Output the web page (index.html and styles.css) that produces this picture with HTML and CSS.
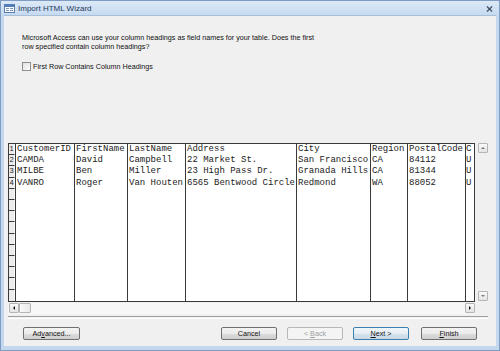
FILE: index.html
```html
<!DOCTYPE html>
<html lang="en">
<head>
  <meta charset="UTF-8">
  <title>Import HTML Wizard</title>
  <link rel="stylesheet" href="styles.css">
</head>
<body>

  <div class="window">
    <div class="titlebar">
      <svg class="app-icon" width="11" height="9" viewBox="0 0 11 9">
        <rect x="0.5" y="0.5" width="10" height="8" fill="#fff" stroke="#5a7fae"/>
        <rect x="1" y="1" width="9" height="2" fill="#4f7fc0"/>
        <rect x="2" y="4" width="3" height="1" fill="#7c95b5"/>
        <rect x="6" y="4" width="3" height="1" fill="#7c95b5"/>
        <rect x="2" y="6" width="3" height="1" fill="#7c95b5"/>
        <rect x="6" y="6" width="3" height="1" fill="#7c95b5"/>
      </svg>
      <span class="title">Import HTML Wizard</span>
      <svg class="close" width="7" height="6" viewBox="0 0 7 6">
        <path d="M1 0.5 L6 5.5 M6 0.5 L1 5.5" stroke="#3d4f66" stroke-width="1.3"/>
      </svg>
    </div>

    <div class="body">
      <p class="intro">Microsoft Access can use your column headings as field names for your table. Does the first<br>row specified contain column headings?</p>

      <label class="check"><span class="box"></span>First Row Contains Column Headings</label>

      <div class="data">
        <div class="data-main">
          <div class="grid">
            <div class="rownums">
              <div class="num">1</div>
              <div class="num">2</div>
              <div class="num">3</div>
              <div class="num">4</div>
              <div class="num"></div>
              <div class="num"></div>
              <div class="num"></div>
              <div class="num"></div>
              <div class="num"></div>
              <div class="num"></div>
              <div class="num"></div>
              <div class="num"></div>
              <div class="num"></div>
              <div class="num"></div>
            </div>
            <div class="col col-id">
              <div class="cell">CustomerID</div>
              <div class="cell">CAMDA</div>
              <div class="cell">MILBE</div>
              <div class="cell">VANRO</div>
            </div>
            <div class="col col-first">
              <div class="cell">FirstName</div>
              <div class="cell">David</div>
              <div class="cell">Ben</div>
              <div class="cell">Roger</div>
            </div>
            <div class="col col-last">
              <div class="cell">LastName</div>
              <div class="cell">Campbell</div>
              <div class="cell">Miller</div>
              <div class="cell">Van Houten</div>
            </div>
            <div class="col col-address">
              <div class="cell">Address</div>
              <div class="cell">22 Market St.</div>
              <div class="cell">23 High Pass Dr.</div>
              <div class="cell">6565 Bentwood Circle</div>
            </div>
            <div class="col col-city">
              <div class="cell">City</div>
              <div class="cell">San Francisco</div>
              <div class="cell">Granada Hills</div>
              <div class="cell">Redmond</div>
            </div>
            <div class="col col-region">
              <div class="cell">Region</div>
              <div class="cell">CA</div>
              <div class="cell">CA</div>
              <div class="cell">WA</div>
            </div>
            <div class="col col-postal">
              <div class="cell">PostalCode</div>
              <div class="cell">84112</div>
              <div class="cell">81344</div>
              <div class="cell">88052</div>
            </div>
            <div class="col col-country">
              <div class="cell">C</div>
              <div class="cell">U</div>
              <div class="cell">U</div>
              <div class="cell">U</div>
            </div>
          </div>

          <div class="hscroll">
            <span class="sbtn"><i class="arrow left"></i></span>
            <span class="thumb"></span>
            <span class="track"></span>
            <span class="sbtn"><i class="arrow right"></i></span>
          </div>
        </div>

        <div class="vscroll">
          <span class="sbtn"><i class="arrow up"></i></span>
          <span class="sbtn"><i class="arrow down"></i></span>
        </div>
      </div>

      <div class="sep"></div>

      <div class="buttons">
        <button class="btn btn-advanced">Ad<u>v</u>anced...</button>
        <span class="spacer"></span>
        <button class="btn">Cancel</button>
        <button class="btn" disabled>&lt; <u>B</u>ack</button>
        <button class="btn btn-default"><u>N</u>ext &gt;</button>
        <button class="btn btn-finish"><u>F</u>inish</button>
      </div>
    </div>
  </div>

</body>
</html>
```

FILE: styles.css
```css
body {
  margin: 0;
  background-color: #f0f0f0;
  font-family: 'Liberation Sans', Arial, sans-serif;
}

.window {
  width: 500px;
  height: 351px;
  box-sizing: border-box;
  display: flex;
  flex-direction: column;
  background-color: #c3d7ee;
  border: 1px solid #7f9dc2;
}

/* title bar */
.titlebar {
  height: 14px;
  display: flex;
  align-items: center;
  padding: 0 6px 0 3px;
  background: linear-gradient(#dce9f7, #c6daf0);
}

.app-icon {
  flex: none;
  margin-right: 3px;
}

.title {
  font-size: 8px;
  color: #1f3a5f;
  flex: 1;
}

.close {
  flex: none;
  margin-top: 1px;
}

/* window body */
.body {
  flex: 1;
  display: flex;
  flex-direction: column;
  margin: 0 3px 4px 3px;
  padding: 0 4px;
  background-color: #f0f0f0;
  border-top: 1px solid #a9bfd9;
  font-size: 7.2px;
  color: #111;
}

.intro {
  margin: 17px 0 0 14px;
  line-height: 9px;
  white-space: nowrap;
}

.check {
  display: flex;
  align-items: center;
  margin: 11px 0 0 14px;
  height: 9px;
}

.check .box {
  width: 7px;
  height: 7px;
  margin-right: 2px;
  border: 1px solid #8f8f8f;
  background: linear-gradient(135deg, #e0e0e0, #fdfdfd);
}

/* data preview */
.data {
  display: flex;
  margin-top: 72px;
}

.data-main {
  width: 467px;
}

.grid {
  display: flex;
  height: 159px;
  box-sizing: border-box;
  overflow: hidden;
  background-color: #fff;
  border: 1px solid #3a3a3a;
  border-right: none;
  font-family: 'Liberation Mono', 'Courier New', monospace;
  font-size: 9px;
  color: #222;
}

.rownums {
  flex: none;
  width: 7px;
  box-sizing: border-box;
  border-right: 1px solid #3a3a3a;
  background-color: #ececec;
}

.num {
  height: 11.214px;
  box-sizing: border-box;
  border-bottom: 1px solid #3a3a3a;
  border-right: 1px solid #fafafa;
  font-family: 'Liberation Sans', Arial, sans-serif;
  font-size: 7.5px;
  line-height: 10px;
  text-align: center;
}

.num:last-child {
  border-bottom: none;
}

.col {
  flex: none;
  box-sizing: border-box;
  border-right: 1px solid #3a3a3a;
  overflow: hidden;
}

.cell {
  height: 11.214px;
  line-height: 11px;
  padding-left: 1px;
  white-space: nowrap;
}

.col-id { width: 59px; }
.col-first { width: 53px; }
.col-last { width: 58px; }
.col-address { width: 111px; }
.col-city { width: 74px; }
.col-region { width: 37px; }
.col-postal { width: 58px; }
.col-country { width: 9px; }

.col-country .cell {
  padding-left: 0;
}

/* scroll bars */
.hscroll {
  display: flex;
  height: 11px;
  margin-top: 1px;
  padding-left: 1px;
  background-color: #f7f7f7;
}

.hscroll .track {
  flex: 1;
}

.sbtn {
  flex: none;
  width: 10px;
  height: 10px;
  box-sizing: border-box;
  display: flex;
  align-items: center;
  justify-content: center;
  border: 1px solid #b5b5b5;
  border-radius: 1px;
  background: linear-gradient(#fafafa, #e4e4e4);
}

.thumb {
  flex: none;
  width: 12px;
  height: 10px;
  box-sizing: border-box;
  border: 1px solid #b5b5b5;
  border-radius: 1px;
  background: linear-gradient(90deg, #fafafa, #e8e8e8);
}

.arrow {
  width: 0;
  height: 0;
  border: 2px solid transparent;
}

.arrow.left { border-right-color: #111; border-left: none; }
.arrow.right { border-left-color: #111; border-right: none; }
.arrow.up { border-bottom-color: #7a7a7a; border-top: none; }
.arrow.down { border-top-color: #7a7a7a; border-bottom: none; }

.vscroll {
  display: flex;
  flex-direction: column;
  justify-content: space-between;
  height: 159px;
  margin-left: 3px;
  padding-bottom: 1px;
  box-sizing: border-box;
}

/* footer */
.sep {
  height: 1px;
  margin: 2px 4px 0 0;
  border-top: 1px solid #a0a0a0;
  border-bottom: 1px solid #fff;
}

.buttons {
  display: flex;
  align-items: center;
  gap: 10px;
  margin: 8px 15px 0 15px;
}

.spacer {
  flex: 1;
}

.btn {
  width: 56px;
  height: 13px;
  padding: 0;
  font-family: 'Liberation Sans', Arial, sans-serif;
  font-size: 7.2px;
  color: #111;
  border: 1px solid #707070;
  border-radius: 2px;
  background: linear-gradient(#f3f3f3 0%, #ebebeb 50%, #dddddd 51%, #cfcfcf 100%);
}

.btn-advanced {
  width: 57px;
}

.btn:disabled {
  color: #a0a0a0;
  border-color: #b5b8ba;
  background: #f4f4f4;
}

.btn-default {
  border-color: #3c7fb1;
  background: linear-gradient(#f0f6fa 0%, #e6eef4 50%, #d6e3ec 51%, #c9d9e6 100%);
}

.btn-finish {
  margin-left: 2px;
}
```
